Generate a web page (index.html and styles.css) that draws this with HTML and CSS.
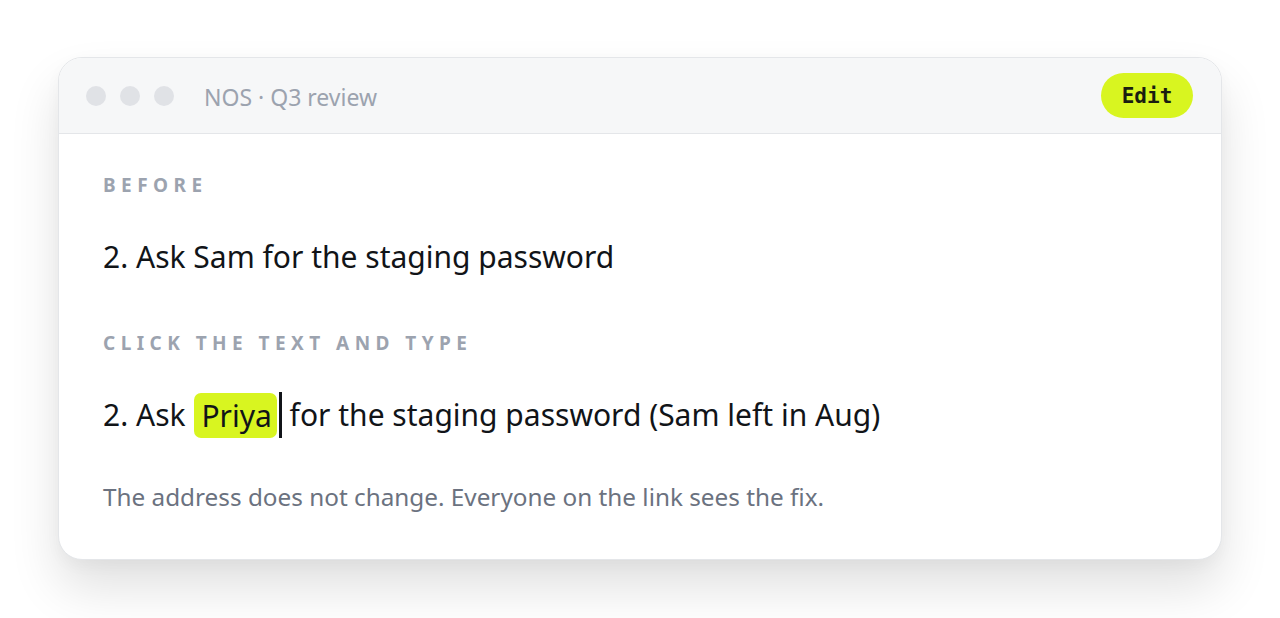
FILE: index.html
```html
<!DOCTYPE html>
<html>
<head>
<meta charset="utf-8">
<link rel="stylesheet" href="styles.css">
</head>
<body>
<div class="page">
  <div class="window">
    <div class="titlebar">
      <div class="dots"><span class="dot"></span><span class="dot"></span><span class="dot"></span></div>
      <div class="title">NOS · Q3 review</div>
      <button class="edit">Edit</button>
    </div>
    <div class="content">
      <div class="label">BEFORE</div>
      <div class="line first">2. Ask Sam for the staging password</div>
      <div class="label second">CLICK THE TEXT AND TYPE</div>
      <div class="line edited"><span>2. Ask </span><span class="hl">Priya</span><span class="caret"></span><span> for the staging password (Sam left in Aug)</span></div>
      <div class="note">The address does not change. Everyone on the link sees the fix.</div>
    </div>
  </div>
</div>
</body>
</html>
```
FILE: styles.css
```css
html, body { margin: 0; padding: 0; background: #ffffff; }
body { font-family: "Noto Sans", "Open Sans", sans-serif; min-height: 618px; }
.page { padding: 57px 58px 0 58px; }
.window {
  width: 1164px;
  height: 503px;
  box-sizing: border-box;
  border: 1px solid #e4e6e9;
  border-radius: 24px;
  background: #ffffff;
  overflow: hidden;
  box-shadow: 0 28px 50px rgba(0,0,0,0.12), 0 6px 16px rgba(0,0,0,0.03);
}
.titlebar {
  height: 76px;
  box-sizing: border-box;
  background: #f6f7f8;
  border-bottom: 1px solid #e4e6e9;
  display: flex;
  align-items: center;
  padding: 0 28px 0 27px;
}
.dots { display: flex; gap: 14px; }
.dot { width: 20px; height: 20px; border-radius: 50%; background: #e0e2e6; display: block; }
.title { margin-left: 30px; font-size: 23px; color: #9ca3af; flex: 1; line-height: 30px; padding-top: 2px; }
.edit {
  border: none;
  background: #d8f520;
  color: #1a1d10;
  font-family: "DejaVu Sans Mono", monospace;
  font-weight: bold;
  font-size: 21px;
  width: 92px;
  height: 45px;
  border-radius: 23px;
  padding: 0;
}
.content { padding: 39px 44px 0 44px; }
.label {
  font-size: 19px;
  font-weight: 700;
  letter-spacing: 5.45px;
  color: #9ca3af;
  line-height: 24px;
}
.line {
  font-size: 30px;
  color: #111418;
  line-height: 40px;
  white-space: pre;
}
.line.first { margin-top: 40px; }
.label.second { margin-top: 54px; }
.line.edited {
  margin-top: 37px;
  height: 46px;
  display: flex;
  align-items: center;
}
.hl {
  background: #d8f520;
  border-radius: 7px;
  padding: 0 5px 0 7px;
  margin-left: 1px;
  line-height: 45px;
}
.caret { width: 3px; height: 46px; background: #111418; margin-left: 2px; display: block; }
.note { margin-top: 43px; font-size: 24.3px; color: #6b7280; line-height: 32px; }
```
